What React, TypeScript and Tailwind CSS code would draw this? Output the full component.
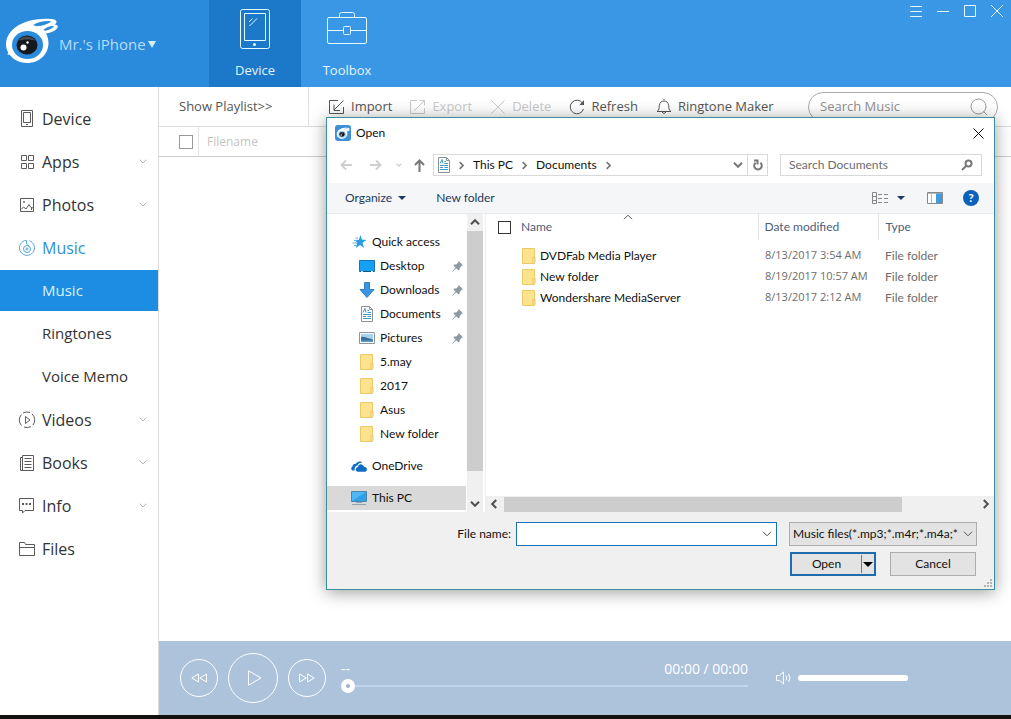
import { useState } from "react";
import type { ReactNode } from "react";

type IconProps = { className?: string };

/* ---------- Small shared icons ---------- */

function Chevron({ className = "", bold = false }: IconProps & { bold?: boolean }) {
  return (
    <svg className={className} viewBox="0 0 10 6" fill="none" stroke="currentColor" strokeWidth={bold ? 2 : 1}>
      <path d="M1 0.800 5 4.800 9 0.800" />
    </svg>
  );
}

function Triangle({ className = "" }: IconProps) {
  return (
    <svg className={className} viewBox="0 0 8 4" fill="currentColor">
      <path d="M0 0H8L4 4Z" />
    </svg>
  );
}

function EyeLogo({ className = "", hole = "#2a8adb" }: IconProps & { hole?: string }) {
  return (
    <svg className={className} viewBox="0 0 54 48">
      <path
        d="M3 22C7 11 20 5 32 3.400C41 2.400 52 2 52.500 5.500C52.700 7 51.500 8 50.500 8.500C54 8.700 54.500 10.500 53 12.500C51 15 47.500 16.500 42 17.500C43.500 20 44.500 23.500 44.500 27C44.500 38.500 35 47 23.500 47C16 47 9 43.500 5.500 38.500L3.500 39L4.200 36.500C1.500 32 1.500 26.500 3 22Z"
        fill="#fff"
      />
      <path d="M29 9C34 5.800 41 4.600 47 5.200C46 7.500 38 10 32.500 10.200Z" fill={hole} />
      <path d="M39.500 13.800C42 11.200 46 9.800 50 10C49 12.200 45 14.200 41 14.800Z" fill={hole} />
      <ellipse cx="23.500" cy="29" rx="15.500" ry="14" fill={hole} />
      <ellipse cx="23" cy="29" rx="10.500" ry="9.500" fill="#15181c" />
      <path d="M14 25C17 19 28 19 32 25C28 23 18 23 14 25Z" fill="#444a52" />
      <circle cx="19.500" cy="31.500" r="3" fill="#fff" />
      <circle cx="23.500" cy="26.500" r="1.200" fill="#fff" />
    </svg>
  );
}

function FolderIcon({ className = "w-[14px] h-4" }: IconProps) {
  return (
    <svg className={className} viewBox="0 0 14 16">
      <path d="M0.500 0.500H12.500V15.500H0.500Z" fill="#fde38d" stroke="#ecca66" />
      <path d="M11 9.500H13V14.500L12 15.500H11Z" fill="#fbe9ab" stroke="#e8c45c" />
    </svg>
  );
}

function DocumentIcon({ className = "w-[14px] h-4" }: IconProps) {
  return (
    <svg className={className} viewBox="0 0 14 16" fill="none">
      <path d="M1.500 0.500H9.500L12.500 3.500V15.500H1.500Z" fill="#fff" stroke="#8b9296" />
      <path d="M9.500 0.500V3.500H12.500" stroke="#8b9296" />
      <path d="M3 6.500 5 2.500 6 6.500M7.500 4.500H9M7.500 6.500H11M3 8.500H11M3 10.500H6M7.500 10.500H11M3 12.500H11" stroke="#3c9bcb" />
    </svg>
  );
}

function PinIcon() {
  return (
    <svg className="h-[11px] w-[11px]" viewBox="0 0 11 11" fill="#8c979f">
      <path d="M6.500 0 11 4.300 9.600 4.800 7.600 7 7.500 9.300 6.200 9.200 4.300 7.300 0.600 10.800 0.200 10.400 3.600 6.600 1.700 4.700 1.800 3.400 4.200 3.500 6.200 1.500Z" />
    </svg>
  );
}

/* ---------- Sidebar ---------- */

function SideSvg({ children }: { children: ReactNode }) {
  return (
    <svg className="h-[18px] w-[18px] shrink-0 opacity-80" viewBox="0 0 18 18" fill="none" stroke="currentColor">
      {children}
    </svg>
  );
}

const sideIcons: Record<string, ReactNode> = {
  device: (
    <SideSvg>
      <path d="M3.500 0.500H14.500V16.500H3.500ZM5.500 2.500H12.500V12.500H5.500ZM8 14.500H10" />
    </SideSvg>
  ),
  apps: (
    <SideSvg>
      <path d="M3.500 2.500H8.500V7.500H3.500ZM10.500 2.500H15.500V7.500H10.500ZM3.500 10.500H8.500V15.500H3.500ZM10.500 10.500H15.500V15.500H10.500Z" />
    </SideSvg>
  ),
  photos: (
    <SideSvg>
      <path d="M2.500 2.500H15.500V15.500H2.500ZM3 13.500 5.500 11 8 13 11 8.500 12.500 11 15 12M13.500 11.500V14" />
      <circle cx="6" cy="6" r="0.600" />
    </SideSvg>
  ),
  music: (
    <SideSvg>
      <path d="M6.500 1.800A7.500 7.500 0 1 0 11.500 1.800" />
      <circle cx="9" cy="10" r="3.500" />
      <circle cx="9" cy="10" r="1" />
      <path d="M6.500 1.500H8.500V5L11 7.300" />
    </SideSvg>
  ),
  videos: (
    <SideSvg>
      <path d="M5 2A8 7.500 0 0 1 12 1.500M14 3A8 8 0 0 1 15 14M13 15.600A8 8 0 0 1 6 16M3.500 14.500A8 8 0 0 1 3.500 3.500" />
      <path d="M7.500 5.500V12.500L12 9Z" />
    </SideSvg>
  ),
  books: (
    <SideSvg>
      <path d="M4.500 1.500H15.500V16.500H2.500V3.500H4.500ZM4.500 3V16M6.500 4.500H13.500M6.500 7.500H13.500M6.500 10.500H13.500M6.500 13.500H13.500" />
    </SideSvg>
  ),
  info: (
    <SideSvg>
      <path d="M1.500 1.500H15.500V13.500H7L4.500 16V13.500H1.500Z" />
      <path d="M4 7H6M7.500 7H9.500M11 7H13" strokeWidth="2" />
    </SideSvg>
  ),
  files: (
    <SideSvg>
      <path d="M1.500 15.500V2.500H6.500L7.500 4.500H16.500V15.500ZM1.500 7.500H16.500" />
    </SideSvg>
  ),
};

type SideItem = { id: string; label: string; icon?: string; expandable?: boolean };

const sideItems: SideItem[] = [
  { id: "device", label: "Device", icon: "device" },
  { id: "apps", label: "Apps", icon: "apps", expandable: true },
  { id: "photos", label: "Photos", icon: "photos", expandable: true },
  { id: "music", label: "Music", icon: "music" },
  { id: "music-list", label: "Music" },
  { id: "ringtones", label: "Ringtones" },
  { id: "voice-memo", label: "Voice Memo" },
  { id: "videos", label: "Videos", icon: "videos", expandable: true },
  { id: "books", label: "Books", icon: "books", expandable: true },
  { id: "info", label: "Info", icon: "info", expandable: true },
  { id: "files", label: "Files", icon: "files" },
];

function Sidebar() {
  const [selected, setSelected] = useState("music-list");

  return (
    <nav className="flex w-[159px] shrink-0 flex-col gap-[2px] border-r border-[#dcdcdc] bg-white pt-[11px]">
      {sideItems.map((item) => {
        const isSelected = item.id === selected;
        let color = "text-[#333]";
        if (isSelected) color = "bg-[#1c8de3] text-[#d9f1ff]";
        else if (item.id === "music") color = "text-[#2d8fd5]";

        return (
          <button
            key={item.id}
            type="button"
            onClick={() => setSelected(item.id)}
            className={`flex h-[41px] w-full items-center pr-[11px] text-left ${color} ${
              item.icon ? "gap-[6px] pl-[18px] text-[16px]" : "pl-[42px] text-[15px]"
            }`}
          >
            {item.icon && sideIcons[item.icon]}
            <span className="flex-1 whitespace-nowrap">{item.label}</span>
            {item.expandable && <Chevron className="h-[5px] w-2 text-[#999]" />}
          </button>
        );
      })}
    </nav>
  );
}

/* ---------- Top bar ---------- */

function Header() {
  return (
    <header className="flex h-[87px] shrink-0 bg-[#3a97e6]">
      <div className="flex w-[209px] items-center bg-[#2a8adb] pl-1">
        <EyeLogo className="mt-4 h-12 w-[54px] self-start" />
        <button type="button" className="flex items-center gap-[2px] pt-px pl-px text-[15px] text-[#b5ddfb]">
          Mr.'s iPhone
          <svg className="h-[7px] w-2" viewBox="0 0 8 7" fill="#d5eeff">
            <path d="M0 0H8L4 7Z" />
          </svg>
        </button>
      </div>

      <button type="button" className="flex w-[92px] flex-col items-center bg-[#1c78c8] pt-[9px] text-[13px] text-[#e3f5ff]">
        <svg className="h-10 w-[30px]" viewBox="0 0 30 40" fill="none" stroke="#e3fbff">
          <rect x="0.500" y="0.500" width="29" height="39" rx="2" />
          <path d="M4.500 4.500H25.500V31.500H4.500ZM9 13 12.500 9.500M9.500 17 17 9.500" />
          <circle cx="14.500" cy="35.500" r="1.500" fill="#e3fbff" stroke="none" />
        </svg>
        <span className="mt-[11px] leading-5">Device</span>
      </button>

      <button type="button" className="flex w-[92px] flex-col items-center pt-[9px] text-[13px] text-[#e3f5ff]">
        <svg className="h-10 w-10" viewBox="0 0 40 40" fill="none" stroke="#e3fbff">
          <rect x="0.500" y="8.500" width="39" height="26" rx="1.500" />
          <path d="M12.500 8.500V5.500Q12.500 3.500 14.500 3.500H25.500Q27.500 3.500 27.500 5.500V8.500M0.500 21.500H16.500M23.500 21.500H39.500" />
          <rect x="16.500" y="17.500" width="7" height="8" rx="1" />
        </svg>
        <span className="mt-[11px] leading-5">Toolbox</span>
      </button>

      <div className="ml-auto flex items-start gap-[15px] pt-[5px] pr-2 text-[#e3fbff]">
        <button type="button" aria-label="Menu">
          <svg className="h-3 w-3" viewBox="0 0 12 12" stroke="currentColor">
            <path d="M0 1.500H12M0 6.500H12M0 11.500H12" />
          </svg>
        </button>
        <button type="button" aria-label="Minimize">
          <svg className="h-3 w-3" viewBox="0 0 12 12" stroke="currentColor">
            <path d="M0 6.500H12" />
          </svg>
        </button>
        <button type="button" aria-label="Maximize">
          <svg className="h-3 w-3" viewBox="0 0 12 12" fill="none" stroke="currentColor">
            <path d="M0.500 0.500H11.500V11.500H0.500Z" />
          </svg>
        </button>
        <button type="button" aria-label="Close window">
          <svg className="h-3 w-3" viewBox="0 0 12 12" stroke="currentColor">
            <path d="M0 0 12 12M12 0 0 12" />
          </svg>
        </button>
      </div>
    </header>
  );
}

/* ---------- Music toolbar ---------- */

type ToolProps = { label: string; disabled?: boolean; children: ReactNode };

function Tool({ label, disabled, children }: ToolProps) {
  return (
    <button
      type="button"
      disabled={disabled}
      className={`flex items-center gap-[6px] whitespace-nowrap ${disabled ? "text-[#c9c9c9]" : "text-[#555]"}`}
    >
      <svg className="h-4 w-4" viewBox="0 0 16 16" fill="none" stroke="currentColor">
        {children}
      </svg>
      {label}
    </button>
  );
}

function Toolbar() {
  return (
    <div className="flex h-10 shrink-0 items-center border-b border-[#dcdcdc] text-[13px] text-[#555]">
      <button type="button" className="h-[39px] w-[150px] shrink-0 border-r border-[#e2e2e2] pl-5 text-left">
        Show Playlist&gt;&gt;
      </button>
      <div className="flex flex-1 items-center gap-[18px] pl-5">
        <Tool label="Import">
          <path d="M9 1.500H0.500V14.500H14.500V8M14.500 1.500 5 11M5 5.500V11.500H11" />
        </Tool>
        <Tool label="Export" disabled>
          <path d="M7 1.500H0.500V14.500H14.500V9M4.500 11.500 14.500 1.500M9.500 1.500H14.500V6.500" />
        </Tool>
        <Tool label="Delete" disabled>
          <path d="M1.500 1.500 14.500 14.500M14.500 1.500 1.500 14.500" />
        </Tool>
        <Tool label="Refresh">
          <path d="M13.500 4A6.800 6.800 0 1 0 14.500 10" />
          <path d="M15 1V6H10.500Z" fill="currentColor" stroke="none" />
        </Tool>
        <Tool label="Ringtone Maker">
          <path d="M1 12.500C3.500 11 3 9 3.300 6.500C3.600 3.500 5.500 2 8 2C10.500 2 12.400 3.500 12.700 6.500C13 9 12.500 11 15 12.500ZM6 12.800Q8 16 10 12.800M7.500 0.500H8.500" />
        </Tool>
      </div>
      <label className="mt-px mr-[13px] flex h-[30px] w-[190px] items-center rounded-full border border-[#a9a9b0] pr-[9px] pl-[11px]">
        <input type="text" aria-label="Search Music" placeholder="Search Music" className="min-w-0 flex-1 outline-none placeholder:text-[#8f8f8f]" />
        <svg className="h-[18px] w-[18px]" viewBox="0 0 18 18" fill="none" stroke="#999">
          <circle cx="8.500" cy="8.500" r="7.500" />
          <path d="M13.500 13.500 17 17" />
        </svg>
      </label>
    </div>
  );
}

/* ---------- Player ---------- */

function Player() {
  return (
    <footer className="flex h-[74px] shrink-0 items-center bg-[#adc3dc] pr-[103px] pl-[21px] text-white">
      <div className="flex items-center gap-[10px]">
        <button type="button" aria-label="Previous" className="flex h-[38px] w-[38px] items-center justify-center rounded-full border border-white">
          <svg className="h-[10px] w-4" viewBox="0 0 16 10" fill="none" stroke="currentColor">
            <path d="M7.500 1V9L0.800 5ZM15.500 1V9L8.800 5Z" />
          </svg>
        </button>
        <button type="button" aria-label="Play" className="flex h-[50px] w-[50px] items-center justify-center rounded-full border border-white">
          <svg className="ml-1 h-4 w-[14px]" viewBox="0 0 14 16" fill="none" stroke="currentColor">
            <path d="M0.500 0.800V15.200L13 8Z" />
          </svg>
        </button>
        <button type="button" aria-label="Next" className="flex h-[38px] w-[38px] items-center justify-center rounded-full border border-white">
          <svg className="h-[10px] w-4" viewBox="0 0 16 10" fill="none" stroke="currentColor">
            <path d="M0.500 1V9L7.200 5ZM8.500 1V9L15.200 5Z" />
          </svg>
        </button>
      </div>

      <div className="ml-[15px] flex flex-1 flex-col pb-1">
        <div className="flex h-5 items-center justify-between text-[14px]">
          <span>--</span>
          <span>00:00 / 00:00</span>
        </div>
        <input
          type="range"
          aria-label="Position"
          defaultValue={0}
          className="h-4 w-full appearance-none bg-transparent [&::-webkit-slider-runnable-track]:h-[2px] [&::-webkit-slider-runnable-track]:bg-[#c0d4ea] [&::-webkit-slider-thumb]:-mt-[6px] [&::-webkit-slider-thumb]:h-[14px] [&::-webkit-slider-thumb]:w-[14px] [&::-webkit-slider-thumb]:appearance-none [&::-webkit-slider-thumb]:rounded-full [&::-webkit-slider-thumb]:border-[5px] [&::-webkit-slider-thumb]:border-white [&::-webkit-slider-thumb]:bg-[#9db4cd]"
        />
      </div>

      <div className="ml-7 flex items-center gap-[6px]">
        <svg className="h-[14px] w-4" viewBox="0 0 16 14" fill="none" stroke="currentColor">
          <path d="M0.500 4.500H3.500L7.500 1V13L3.500 9.500H0.500ZM10 4.500Q11.500 7 10 9.500M12.500 3Q15.500 7 12.500 11" />
        </svg>
        <input
          type="range"
          aria-label="Volume"
          defaultValue={100}
          className="h-4 w-[110px] appearance-none bg-transparent [&::-webkit-slider-runnable-track]:h-[6px] [&::-webkit-slider-runnable-track]:rounded-full [&::-webkit-slider-runnable-track]:bg-white [&::-webkit-slider-thumb]:h-[6px] [&::-webkit-slider-thumb]:w-[6px] [&::-webkit-slider-thumb]:appearance-none [&::-webkit-slider-thumb]:rounded-full [&::-webkit-slider-thumb]:bg-white"
        />
      </div>
    </footer>
  );
}

/* ---------- Open dialog ---------- */

const treeIcons: Record<string, ReactNode> = {
  star: (
    <svg className="h-[14px] w-[15px]" viewBox="0 0 15 14">
      <path d="M8.500 0 9.800 4.500 14.500 5 10.500 7.800 12 13 8 10 4 13 5.200 8 3 5 6.800 4.800Z" fill="#2d9be0" />
      <path d="M2 5.500H5M0.500 8H5M2 10.500H5M3.500 3H6" stroke="#5db5e8" />
    </svg>
  ),
  desktop: (
    <svg className="h-[13px] w-4" viewBox="0 0 16 13">
      <path d="M0.500 0.500H15.500V11.500H0.500Z" fill="#15a0f5" stroke="#1673b5" />
      <path d="M1 11.500H15" stroke="#0c578f" />
      <path d="M2 11.500H4M12 11.500H14" stroke="#d7efff" />
    </svg>
  ),
  download: (
    <svg className="h-4 w-4" viewBox="0 0 16 16">
      <path d="M5.500 0.500H10.500V7.500H15L8 15.500 1 7.500H5.500Z" fill="#3c93df" stroke="#2f7fc8" />
    </svg>
  ),
  document: <DocumentIcon />,
  pictures: (
    <svg className="h-3 w-4" viewBox="0 0 16 12">
      <path d="M0.500 0.500H15.500V11.500H0.500Z" fill="#fff" stroke="#8c979f" />
      <path d="M2 2H14V10H2Z" fill="#a8d4f3" />
      <path d="M2 5C5 4 8 6 14 7.500V10H2Z" fill="#3d7196" />
      <path d="M2 8.500H14V10H2Z" fill="#5b9dc9" />
    </svg>
  ),
  folder: <FolderIcon />,
  onedrive: (
    <svg className="h-[11px] w-4" viewBox="0 0 16 11" fill="#0f6cc4">
      <path d="M3.800 9.500H1.500C0 9 -0.300 6.500 1.500 5.500C1.500 3.500 3.500 2.500 4.800 3C6 0.500 9.500 -0.500 11.500 2C9 1.500 7.200 2.500 6.500 4.500C4.500 4.700 3 7 3.800 9.500Z" />
      <path d="M6.500 10.700C4 10.500 4 6.500 7 6C7 2.500 12 2 13 5.800C16.500 5.800 16.800 10.300 14 10.700Z" />
    </svg>
  ),
  pc: (
    <svg className="h-4 w-4" viewBox="0 0 16 16">
      <path d="M0.500 1.500H15.500V11.500H0.500Z" fill="#4fb7f5" stroke="#4a86ae" />
      <path d="M1 11 15 2V11Z" fill="#2f9fe8" />
      <path d="M5 12.500H11M1 14.500H15" stroke="#8fa3b3" />
    </svg>
  ),
};

type TreeItem = { label: string; icon: string; root?: boolean; pinned?: boolean; selected?: boolean; gap?: boolean };

const treeItems: TreeItem[] = [
  { label: "Quick access", icon: "star", root: true },
  { label: "Desktop", icon: "desktop", pinned: true },
  { label: "Downloads", icon: "download", pinned: true },
  { label: "Documents", icon: "document", pinned: true },
  { label: "Pictures", icon: "pictures", pinned: true },
  { label: "5.may", icon: "folder" },
  { label: "2017", icon: "folder" },
  { label: "Asus", icon: "folder" },
  { label: "New folder", icon: "folder" },
  { label: "OneDrive", icon: "onedrive", root: true, gap: true },
  { label: "This PC", icon: "pc", root: true, gap: true, selected: true },
];

const files = [
  { name: "DVDFab Media Player", date: "8/13/2017 3:54 AM", type: "File folder" },
  { name: "New folder", date: "8/19/2017 10:57 AM", type: "File folder" },
  { name: "Wondershare MediaServer", date: "8/13/2017 2:12 AM", type: "File folder" },
];

function ScrollArrow({ className = "", label }: { className?: string; label: string }) {
  return (
    <button type="button" aria-label={label} className="flex h-4 w-4 shrink-0 items-center justify-center text-[#505050]">
      <Chevron bold className={`h-[6px] w-[10px] ${className}`} />
    </button>
  );
}

function FolderTree() {
  return (
    <ul className="w-[139px] shrink-0 pt-4 pb-[2px]">
      {treeItems.map((item, i) => (
        <li key={i} className={item.gap ? "mt-2" : ""}>
          <button
            type="button"
            className={`flex h-6 w-full items-center gap-[5px] pr-[3px] text-left ${
              item.root ? "pl-6" : "pl-8"
            } ${item.selected ? "bg-[#d9d9d9]" : ""}`}
          >
            <span className="flex w-4 shrink-0 justify-center">{treeIcons[item.icon]}</span>
            <span className="flex-1 whitespace-nowrap">{item.label}</span>
            {item.pinned && <PinIcon />}
          </button>
        </li>
      ))}
    </ul>
  );
}

function FileList() {
  return (
    <div className="relative flex flex-1 flex-col">
      <Chevron className="absolute top-0 left-[137px] h-[6px] w-[10px] rotate-180 text-[#555]" />
      <table className="w-full table-fixed border-collapse text-left text-[#6d6d6d]">
        <colgroup>
          <col className="w-[272px]" />
          <col className="w-[120px]" />
          <col />
        </colgroup>
        <thead>
          <tr className="h-[26px] text-[#4c607a]">
            <th className="border-r border-[#e5e5e5] p-0 pl-3 font-normal">
              <label className="flex items-center gap-[10px]">
                <input type="checkbox" className="h-[13px] w-[13px] appearance-none border border-[#333] bg-white" />
                Name
              </label>
            </th>
            <th className="border-r border-[#e5e5e5] p-0 pl-[6px] font-normal">Date modified</th>
            <th className="p-0 pl-[7px] font-normal">Type</th>
          </tr>
        </thead>
        <tbody>
          <tr className="h-[5px]" aria-hidden="true" />
          {files.map((file) => (
            <tr key={file.name} className="h-[21px]">
              <td className="p-0 pl-9 text-[#111]">
                <span className="flex items-center gap-1">
                  <FolderIcon />
                  {file.name}
                </span>
              </td>
              <td className="p-0 pl-[7px] font-['Open_Sans',sans-serif] text-[11px] whitespace-nowrap">{file.date}</td>
              <td className="p-0 pl-[7px]">{file.type}</td>
            </tr>
          ))}
        </tbody>
      </table>

      <div className="mt-auto flex h-4 items-center bg-[#f0f0f0]">
        <ScrollArrow label="Scroll left" className="rotate-90" />
        <div className="flex-1 pl-[2px]">
          <div className="h-[15px] w-[84%] bg-[#cdcdcd]" />
        </div>
        <ScrollArrow label="Scroll right" className="-rotate-90" />
      </div>
    </div>
  );
}

function OpenDialog() {
  return (
    <section
      role="dialog"
      aria-label="Open"
      className="absolute top-[117px] left-[326px] w-[669px] border border-[#3a8fa0] bg-white font-['Lato','Open_Sans',sans-serif] text-[12px] text-[#111] shadow-[0_2px_16px_rgba(0,0,0,0.4)]"
    >
      {/* Title */}
      <div className="flex h-[30px] items-center pr-[10px] pl-2">
        <span className="flex h-4 w-4 items-center justify-center rounded-[3px] bg-[#3d8fd8]">
          <EyeLogo className="h-3 w-[14px]" hole="#9fd0f5" />
        </span>
        <h1 className="flex-1 pl-[5px]">Open</h1>
        <button type="button" aria-label="Close">
          <svg className="h-[11px] w-[11px]" viewBox="0 0 11 11" stroke="#000">
            <path d="M0.500 0.500 10.500 10.500M10.500 0.500 0.500 10.500" />
          </svg>
        </button>
      </div>

      {/* Address and search */}
      <div className="flex h-[35px] items-center pr-3 pb-px pl-[13px]">
        <button type="button" aria-label="Back" disabled>
          <svg className="h-3 w-3" viewBox="0 0 12 12" fill="none" stroke="#cfcfcf" strokeWidth="2">
            <path d="M12 6H1.500M6 1.500 1.500 6 6 10.500" />
          </svg>
        </button>
        <button type="button" aria-label="Forward" disabled className="ml-[18px]">
          <svg className="h-3 w-3" viewBox="0 0 12 12" fill="none" stroke="#cfcfcf" strokeWidth="2">
            <path d="M0 6H10.500M6 1.500 10.500 6 6 10.500" />
          </svg>
        </button>
        <button type="button" aria-label="Recent locations" className="ml-[14px] text-[#ccc]">
          <Chevron bold className="h-1 w-[6px]" />
        </button>
        <button type="button" aria-label="Up" className="ml-3">
          <svg className="h-[13px] w-[11px]" viewBox="0 0 11 13" fill="none" stroke="#777" strokeWidth="2">
            <path d="M5.500 13V1.500M1 6 5.500 1.500 10 6" />
          </svg>
        </button>

        <div className="ml-2 flex h-[22px] flex-1 items-center border border-[#d9d9d9] pl-[3px]">
          <DocumentIcon />
          <Chevron bold className="ml-[6px] h-[5px] w-[9px] -rotate-90 text-[#777]" />
          <button type="button" className="ml-[7px]">This PC</button>
          <Chevron bold className="ml-[7px] h-[5px] w-[9px] -rotate-90 text-[#777]" />
          <button type="button" className="ml-[7px]">Documents</button>
          <Chevron bold className="ml-[7px] h-[5px] w-[9px] -rotate-90 text-[#777]" />
          <button type="button" aria-label="Previous locations" className="mr-1 ml-auto text-[#777]">
            <Chevron bold className="h-[6px] w-[10px]" />
          </button>
          <button type="button" aria-label="Refresh" className="flex h-5 w-5 items-center justify-center border-l border-[#d9d9d9]">
            <svg className="h-3 w-[10px]" viewBox="0 0 10 12" fill="none" stroke="#777" strokeWidth="2">
              <path d="M2.500 3.800A3.800 3.800 0 1 0 7.500 3.800M1 1.500H4.500V5.500" />
            </svg>
          </button>
        </div>

        <label className="ml-3 flex h-[22px] w-[202px] items-center border border-[#d9d9d9] pr-2 pl-2">
          <input type="text" aria-label="Search Documents" placeholder="Search Documents" className="min-w-0 flex-1 outline-none placeholder:text-[#6d6d6d]" />
          <svg className="h-3 w-3" viewBox="0 0 12 12" fill="none" stroke="#777" strokeWidth="2">
            <circle cx="7.500" cy="4.500" r="3" />
            <path d="M5 7 1 11" />
          </svg>
        </label>
      </div>

      {/* Command bar */}
      <div className="flex h-[31px] items-center border-b border-[#e8eaec] bg-[#f5f6f7] pr-[15px] pl-[18px] text-[#1e395b]">
        <button type="button" className="flex items-center gap-[6px]">
          Organize
          <Triangle className="h-1 w-2" />
        </button>
        <button type="button" className="ml-[30px]">New folder</button>
        <button type="button" aria-label="Change view" className="ml-auto flex items-center gap-[9px]">
          <svg className="h-3 w-4" viewBox="0 0 16 12" fill="none" stroke="#888">
            <path d="M0.500 0.500H4.500V11.500H0.500ZM0.500 4.500H4.500M0.500 8.500H4.500M6 2.500H10M12 2.500H16M6 6.500H10M12 6.500H16M6 10.500H10M12 10.500H16" />
          </svg>
          <Triangle className="h-1 w-2" />
        </button>
        <button type="button" aria-label="Preview pane" className="ml-[22px]">
          <svg className="h-3 w-4" viewBox="0 0 16 12" fill="none">
            <path d="M0.500 0.500H15.500V11.500H0.500Z" fill="#fff" stroke="#888" />
            <path d="M1 1.500H15M4.500 1V11" stroke="#b9b9b9" />
            <path d="M9 1.500H15V11H9Z" fill="#3e9be0" />
          </svg>
        </button>
        <button type="button" aria-label="Help" className="ml-5 flex h-4 w-4 items-center justify-center rounded-full bg-[#0c62b8] text-[12px] font-bold text-white">
          ?
        </button>
      </div>

      {/* Folder tree and files */}
      <div className="flex">
        <FolderTree />
        <div className="ml-px flex w-4 flex-col bg-[#f0f0f0]">
          <ScrollArrow label="Scroll up" className="rotate-180" />
          <div className="mt-px h-[240px] bg-[#cdcdcd]" />
          <div className="mt-auto">
            <ScrollArrow label="Scroll down" />
          </div>
        </div>
        <div className="ml-[2px] w-px bg-[#efefef]" />
        <FileList />
      </div>

      {/* File name and buttons */}
      <div className="relative bg-[#f0f0f0] pt-[10px] pr-[17px] pb-[13px]">
        <div className="flex items-center">
          <label htmlFor="file-name" className="flex-1 pr-[5px] text-right">File name:</label>
          <div className="flex h-6 w-[261px] items-center border border-[#1a70b8] bg-white pr-1">
            <input id="file-name" type="text" className="h-full min-w-0 flex-1 px-1 outline-none" />
            <button type="button" aria-label="Show file names" className="text-[#555]">
              <Chevron className="h-[6px] w-[10px]" />
            </button>
          </div>
          <div className="relative ml-3 w-[188px]">
            <select aria-label="File type" className="h-6 w-full appearance-none border border-[#adadad] bg-[#e3e3e3] pr-[18px] pl-[3px]">
              <option>Music files(*.mp3;*.m4r;*.m4a;*</option>
            </select>
            <Chevron className="pointer-events-none absolute top-[9px] right-1 h-[6px] w-[10px] text-[#555]" />
          </div>
        </div>
        <div className="mt-[6px] flex justify-end gap-[14px] pr-px">
          <div className="flex h-6 w-[86px] items-center border-2 border-[#1d6cae] bg-[#e3e3e3]">
            <button type="button" className="flex-1 text-center">Open</button>
            <button type="button" aria-label="Open options" className="flex h-[18px] w-[13px] items-center justify-center border-l border-[#777]">
              <svg className="h-[5px] w-[10px]" viewBox="0 0 10 5" fill="#000">
                <path d="M0 0H10L5 5Z" />
              </svg>
            </button>
          </div>
          <button type="button" className="h-6 w-[86px] border border-[#adadad] bg-[#e3e3e3]">Cancel</button>
        </div>
        <svg className="absolute right-[2px] bottom-[2px] h-2 w-2" viewBox="0 0 8 8" fill="#b5b5b5">
          <path d="M6 0H8V2H6ZM3 3H5V5H3ZM6 3H8V5H6ZM0 6H2V8H0ZM3 6H5V8H3ZM6 6H8V8H6Z" />
        </svg>
      </div>
    </section>
  );
}

function App() {
  return (
    <div className="relative flex min-h-screen flex-col bg-white font-['Open_Sans','Noto_Sans',sans-serif]">
      <Header />

      <div className="flex flex-1">
        <Sidebar />
        <main className="flex min-w-0 flex-1 flex-col">
          <Toolbar />
          <div className="flex h-[30px] shrink-0 items-center border-b border-[#ccc] pl-5 text-[12px] text-[#c4c4c4]">
            <input type="checkbox" aria-label="Select all" className="h-[14px] w-[14px] appearance-none border border-[#999]" />
            <span className="ml-[5px] h-full border-l border-[#e2e2e2] pl-2 leading-[29px]">Filename</span>
          </div>
          <div className="flex-1" />
          <Player />
        </main>
      </div>

      <div className="h-1 shrink-0 bg-[#12110f]" />

      <OpenDialog />
    </div>
  );
}

export default App;
